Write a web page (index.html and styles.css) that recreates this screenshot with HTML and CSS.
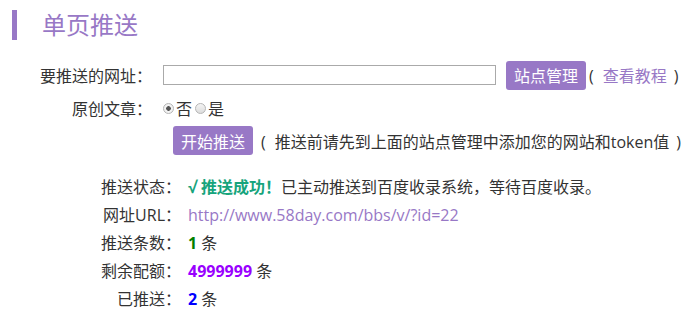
FILE: index.html
```html
<!DOCTYPE html>
<html lang="zh-CN">

<head>
  <meta charset="UTF-8">
  <meta name="viewport" content="width=device-width, initial-scale=1.0">
  <title>单页推送</title>
  <link rel="stylesheet" href="styles.css">
</head>

<body>
  <h1 class="title">单页推送</h1>

  <form class="form">
    <div class="row row-url">
      <label class="label" for="urlField">要推送的网址：</label>
      <input type="text" id="urlField" class="urlField">
      <button type="button" class="btn btn-site">站点管理</button>
      <span class="paren">(<a href="#" class="link inner">查看教程</a>)</span>
    </div>

    <div class="row row-radio">
      <span class="label">原创文章：</span>
      <label class="radio"><input type="radio" name="original" checked>否</label>
      <label class="radio"><input type="radio" name="original">是</label>
    </div>

    <div class="row row-submit">
      <span class="label"></span>
      <button type="button" class="btn btn-push">开始推送</button>
      <span class="paren tip">(<span class="inner">推送前请先到上面的站点管理中添加您的网站和token值</span>)</span>
    </div>
  </form>

  <div class="result">
    <div class="line">
      <span class="key">推送状态：</span>
      <span class="val"><b class="ok">√ 推送成功！</b>已主动推送到百度收录系统，等待百度收录。</span>
    </div>
    <div class="line">
      <span class="key">网址URL：</span>
      <span class="val"><a href="#" class="link">http://www.58day.com/bbs/v/?id=22</a></span>
    </div>
    <div class="line">
      <span class="key">推送条数：</span>
      <span class="val"><b class="num-green">1</b> 条</span>
    </div>
    <div class="line">
      <span class="key">剩余配额：</span>
      <span class="val"><b class="num-purple">4999999</b> 条</span>
    </div>
    <div class="line">
      <span class="key">已推送：</span>
      <span class="val"><b class="num-blue">2</b> 条</span>
    </div>
  </div>
</body>

</html>
```

FILE: styles.css
```css
html {
  font-family: "Open Sans", "Noto Sans CJK SC", sans-serif;
}

body {
  margin: 0;
  background-color: #fff;
  color: #333;
  font-size: 16px;
}

.title {
  margin: 10px 0 0 12px;
  height: 30px;
  line-height: 30px;
  padding-left: 25px;
  border-left: 5px solid #9878c6;
  color: #9878c6;
  font-size: 24px;
  font-weight: normal;
}

.form {
  margin-top: 20px;
}

.row {
  display: flex;
  align-items: center;
}

.label {
  width: 152px;
  padding-left: 8px;
  text-align: right;
  margin-right: 11px;
  box-sizing: border-box;
}

.row-url {
  height: 30px;
}

.urlField {
  width: 333px;
  height: 20px;
  box-sizing: border-box;
  border: 1px solid #aaa;
  padding: 0 4px;
  margin: 0;
}

.btn {
  background-color: #9878c6;
  color: #fff;
  border: none;
  border-radius: 3px;
  font-family: inherit;
  font-size: 16px;
  height: 29px;
  padding: 0 8px;
}

.btn-site {
  margin-left: 10px;
}

.paren {
  margin-left: 3px;
}

.paren .inner {
  margin: 0 7px 0 9px;
}

.link {
  color: #9878c6;
  text-decoration: none;
}

.row-radio {
  height: 24px;
  margin-top: 6px;
}

.radio {
  display: flex;
  align-items: center;
  margin-right: 3px;
}

.radio input {
  appearance: none;
  width: 11px;
  height: 11px;
  margin: 0 2px 0 0;
  border: 1px solid #b5b5b5;
  border-radius: 50%;
  background: linear-gradient(#f4f4f4, #dcdcdc);
  box-sizing: border-box;
}

.radio input:checked {
  background: radial-gradient(circle, #555 0, #555 2px, #f2f2f2 2.6px);
}

.row-submit {
  height: 29px;
  margin-top: 6px;
}

.btn-push {
  margin-left: 10px;
}

.tip {
  margin-left: 8px;
}

.result {
  margin-top: 18px;
}

.line {
  display: flex;
  line-height: 28px;
  height: 28px;
}

.key {
  width: 181px;
  text-align: right;
  margin-right: 7px;
}

.ok {
  color: #17a47c;
}

.num-green {
  color: #008000;
}

.num-purple {
  color: #9900ff;
}

.num-blue {
  color: #0000ff;
}
```
